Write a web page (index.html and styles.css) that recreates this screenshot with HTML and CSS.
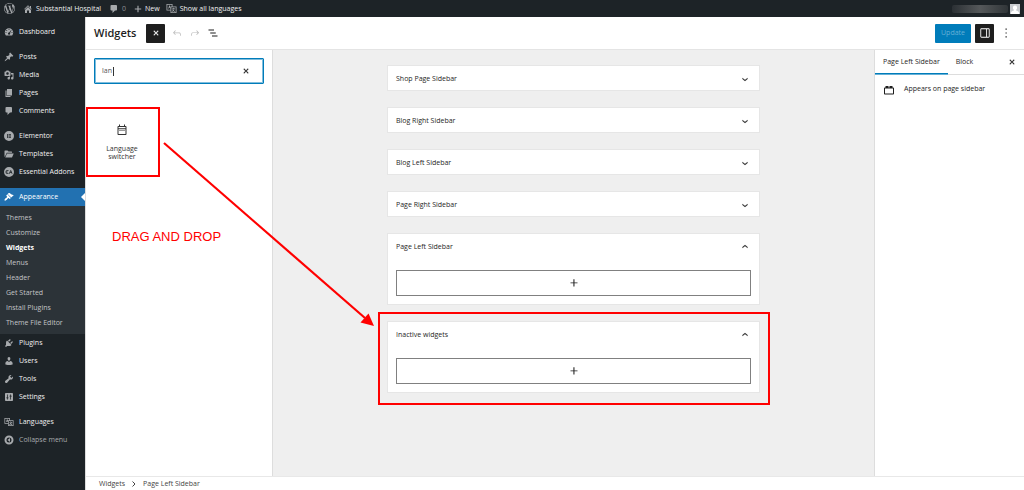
FILE: index.html
```html
<!DOCTYPE html>
<html lang="en">
<head>
<meta charset="utf-8">
<title>Widgets</title>
<link rel="stylesheet" href="styles.css">
</head>
<body>
<svg class="sprite" aria-hidden="true">
  <symbol id="wp" viewBox="0 0 24 24"><path d="M21.469 6.825c.84 1.537 1.318 3.3 1.318 5.175 0 3.979-2.156 7.456-5.363 9.325l3.295-9.527c.615-1.54.82-2.771.82-3.864 0-.405-.026-.78-.07-1.11m-7.981.105c.647-.03 1.232-.105 1.232-.105.582-.075.514-.93-.067-.899 0 0-1.755.135-2.88.135-1.064 0-2.85-.15-2.85-.15-.585-.03-.661.855-.075.885 0 0 .54.061 1.125.09l1.68 4.605-2.37 7.08L5.354 6.9c.649-.03 1.234-.1 1.234-.1.585-.075.516-.93-.065-.896 0 0-1.746.138-2.874.138-.2 0-.438-.008-.69-.015C4.911 3.15 8.235 1.215 12 1.215c2.809 0 5.365 1.072 7.286 2.833-.046-.003-.091-.009-.141-.009-1.06 0-1.812.923-1.812 1.914 0 .89.513 1.643 1.06 2.531.411.72.89 1.643.89 2.977 0 .915-.354 1.994-.821 3.479l-1.075 3.585-3.9-11.61.001.014zM12 22.784c-1.059 0-2.081-.153-3.048-.437l3.237-9.406 3.315 9.087c.024.053.05.101.078.149-1.12.393-2.325.609-3.582.609M1.211 12c0-1.564.336-3.05.935-4.39L7.29 21.709C3.694 19.96 1.212 16.271 1.211 12M12 0C5.385 0 0 5.385 0 12s5.385 12 12 12 12-5.385 12-12S18.615 0 12 0"/></symbol>
  <symbol id="home" viewBox="0 0 20 20"><path d="M16 8.500l1.530 1.530-1.060 1.060L10 4.600l-6.470 6.490-1.060-1.060L10 2.500l4 4V4h2v4.500zm-6-2.460l6 5.990V18H12v-5H8v5H4v-5.970z"/></symbol>
  <symbol id="comment" viewBox="0 0 20 20"><path d="M5 2h9q.82 0 1.410.59T16 4v7q0 .82-.59 1.410T14 13h-2l-5 5v-5H5q-.82 0-1.410-.59T3 11V4q0-.82.59-1.410T5 2z"/></symbol>
  <symbol id="add" viewBox="0 0 20 20"><path d="M8.600 2h2.800v6.600H18v2.800h-6.600V18H8.600v-6.600H2V8.600h6.600z"/></symbol>
  <symbol id="lang" viewBox="0 0 22 20"><path fill-rule="evenodd" d="M1 1h12v5h8v13H9v-5H1zm1.600 1.600v9.800H9V6h2.400V2.600zM10.600 7.600v9.800h8.800V7.600z"/><path d="M6.500 4h1.200l2 6H8.200l-.4-1.300H6.300L5.900 10H4.500zM14.300 8.500h1.400v1.300h2.500V11h-1.200c-.3 1.200-.8 2.100-1.400 2.900.7.600 1.500 1 2.400 1.300l-.6 1.200c-1.100-.4-2-.9-2.800-1.600-.8.700-1.700 1.200-2.700 1.600l-.5-1.200c.9-.3 1.600-.7 2.300-1.300-.5-.6-.9-1.200-1.200-2l1.200-.3c.2.500.5 1 .9 1.400.5-.6.800-1.200 1-2h-3.900V9.800h2.600z"/></symbol>
  <symbol id="dash" viewBox="0 0 20 20"><path fill-rule="evenodd" d="M3.760 17h12.480c1.390-1.560 2.260-3.600 2.260-5.850C18.500 6.400 14.700 2.500 10 2.500s-8.500 3.900-8.500 8.650c0 2.250.87 4.290 2.260 5.850zM10 4a1 1 0 1 1 0 2 1 1 0 0 1 0-2zM5.500 6a1 1 0 1 1 0 2 1 1 0 0 1 0-2zm9.200-.3l.3.300-2.900 6.100A2.200 2.200 0 1 1 10.300 11zM4 10a1 1 0 1 1 0 2 1 1 0 0 1 0-2zm12 0a1 1 0 1 1 0 2 1 1 0 0 1 0-2z"/></symbol>
  <symbol id="pin" viewBox="0 0 20 20"><path d="M10.440 3.020l1.820-1.820 6.360 6.350-1.830 1.820c-1.050-.68-2.480-.57-3.410.36l-.75.750c-.92.930-1.040 2.350-.35 3.410l-1.830 1.820-2.410-2.410-2.800 2.790c-.42.420-3.380 2.710-3.800 2.290s1.860-3.390 2.280-3.810l2.790-2.790L4.100 9.360l1.830-1.820c1.050.690 2.480.57 3.400-.36l.75-.75c.93-.92 1.050-2.350.36-3.410z"/></symbol>
  <symbol id="media" viewBox="0 0 20 20"><path d="M13 11V4c0-.55-.45-1-1-1h-1.670L9 1H5L3.670 3H2c-.55 0-1 .45-1 1v7c0 .55.450 1 1 1h10c.55 0 1-.45 1-1zM7 4.500c1.380 0 2.500 1.120 2.500 2.500S8.380 9.500 7 9.500 4.500 8.380 4.500 7 5.620 4.500 7 4.500zM14 6h5v10.500c0 1.380-1.120 2.500-2.500 2.500S14 17.880 14 16.500s1.120-2.500 2.500-2.500c.17 0 .34.020.5.050V9h-3V6zm-4 8.050V13h2v3.500c0 1.380-1.120 2.500-2.500 2.500S7 17.880 7 16.500 8.120 14 9.500 14c.17 0 .34.020.5.050z"/></symbol>
  <symbol id="pages" viewBox="0 0 20 20"><path d="M6 15V2h10v13H6zm-1 1h8v2H3V5h2v11z"/></symbol>
  <symbol id="elementor" viewBox="0 0 20 20"><path fill-rule="evenodd" d="M10 0a10 10 0 1 1 0 20 10 10 0 0 1 0-20zM6 6v8h1.600V6zm3 0v1.600h5V6zm0 3.200v1.600h5V9.200zm0 3.200V14h5v-1.600z"/></symbol>
  <symbol id="folder" viewBox="0 0 20 20"><path d="M1 16V4q0-1 1-1h5l2 2h6q1 0 1 1v1.500H5.500L2.500 14zm1.500 1L6 9h13.500L16 17z"/></symbol>
  <symbol id="ea" viewBox="0 0 20 20"><path fill-rule="evenodd" d="M10 0a10 10 0 1 1 0 20 10 10 0 0 1 0-20zM5.500 6.500C4 6.500 3.200 8 3.200 10s.8 3.500 2.300 3.500H9v-1.400H6c-.8 0-1.200-.5-1.300-1.400H8V9.300H4.700c.1-.9.5-1.400 1.300-1.400h3V6.500zm7.200 0l-3 7h1.600l.6-1.500h3l.6 1.500h1.600l-3-7zm.7 1.800l1 2.400h-2z"/></symbol>
  <symbol id="brush" viewBox="0 0 20 20"><path d="M14.480 11.060L7.410 3.990l1.500-1.500c.5-.56 2.300-.47 3.510.32 1.210.800 1.430 1.280 2.910 2.100 1.180.640 2.450 1.260 4.450.85zm-.71.710L6.700 4.700 4.930 6.470c-.39.390-.39 1.020 0 1.410l1.060 1.060c.39.390.39 1.030 0 1.420-.6.600-1.430 1.110-2.210 1.690-.35.260-.7.530-1.010.84C1.430 14.230.400 16.080 1.400 17.070c.99 1 2.840-.03 4.180-1.360.310-.31.580-.66.850-1.020.570-.78 1.080-1.610 1.690-2.210.39-.39 1.020-.39 1.410 0l1.060 1.060c.39.390 1.020.390 1.410 0z"/></symbol>
  <symbol id="plug" viewBox="0 0 20 20"><path d="M13.110 4.360L9.870 7.600 8 5.730l3.240-3.240c.35-.34 1.050-.2 1.560.32.520.510.660 1.210.31 1.550zm-8 1.770l.91-1.120 9.010 9.010-1.190.84c-.71.710-2.630 1.160-3.820 1.160H6.140L4.900 17.260c-.59.590-1.540.590-2.120 0-.59-.58-.59-1.530 0-2.120l1.240-1.240v-3.880c0-1.130.4-3.190 1.090-3.890zm7.260 3.970l3.240-3.240c.340-.35 1.040-.21 1.550.31.520.510.660 1.210.310 1.550l-3.240 3.250z"/></symbol>
  <symbol id="user" viewBox="0 0 20 20"><path d="M10 9.250c-2.270 0-2.730-3.440-2.730-3.440C7 4.020 7.820 2 9.970 2c2.160 0 2.980 2.020 2.710 3.810 0 0-.41 3.440-2.680 3.440zm0 2.570L12.720 10c2.390 0 4.520 2.330 4.520 4.530v2.490s-3.650 1.130-7.240 1.130c-3.650 0-7.240-1.130-7.240-1.130v-2.490c0-2.250 1.940-4.480 4.470-4.480z"/></symbol>
  <symbol id="wrench" viewBox="0 0 20 20"><path d="M16.680 9.770c-1.340 1.340-3.300 1.670-4.950.99l-5.410 6.520c-.99.990-2.590.990-3.580 0s-.99-2.590 0-3.570l6.520-5.420c-.68-1.650-.35-3.610.99-4.950 1.280-1.280 3.120-1.620 4.720-1.060l-2.890 2.890 2.820 2.820 2.860-2.870c.530 1.580.180 3.390-1.080 4.650z"/></symbol>
  <symbol id="settings" viewBox="0 0 20 20"><path fill-rule="evenodd" d="M18 16V4c0-1.100-.9-2-2-2H4c-1.100 0-2 .9-2 2v12c0 1.100.9 2 2 2h12c1.100 0 2-.9 2-2zM6 5h1.500v6H9v1.500H7.500V15H6v-2.500H4.500V11H6zm6.500 0H14v2.500h1.500V9H14v6h-1.500V9H11V7.500h1.500z"/></symbol>
  <symbol id="collapse" viewBox="0 0 20 20"><path fill-rule="evenodd" d="M10 1a9 9 0 1 1 0 18 9 9 0 0 1 0-18zm0 4a5 5 0 1 0 0 10 5 5 0 0 0 0-10z"/><path d="M12 6v8l-5-4z"/></symbol>
  <symbol id="close" viewBox="0 0 24 24"><path d="M12 13.060l3.712 3.713 1.061-1.060L13.061 12l3.712-3.712-1.060-1.060L12 10.938 8.288 7.227l-1.061 1.060L10.939 12l-3.712 3.712 1.060 1.061L12 13.061z" stroke="currentColor" stroke-width=".5"/></symbol>
  <symbol id="undo" viewBox="0 0 24 24"><path d="M18.300 11.700c-.6-.6-1.400-.9-2.300-.9H6.700l2.900-3.300-1.100-1-4.500 5L8.500 16l1-1-2.700-2.700H16c.5 0 .9.200 1.300.5 1 1 1 3.400 1 4.500v.3h1.500v-.2c0-1.500 0-4.300-1.500-5.700z"/></symbol>
  <symbol id="redo" viewBox="0 0 24 24"><path d="M15.600 6.500l-1.100 1 2.900 3.300H8c-.9 0-1.700.3-2.300.9-1.400 1.500-1.400 4.200-1.400 5.600v.2h1.500v-.3c0-1.100 0-3.500 1-4.500.3-.3.700-.5 1.300-.5h9.200L14.500 15l1.100 1.100 4.600-4.600-4.600-5z"/></symbol>
  <symbol id="list" viewBox="0 0 24 24"><path d="M3 5h11v2H3zm3.500 6h11v2h-11zM10 17h11v2H10z"/></symbol>
  <symbol id="drawer" viewBox="0 0 24 24"><path fill-rule="evenodd" d="M18 4H6c-1.100 0-2 .9-2 2v12c0 1.100.9 2 2 2h12c1.100 0 2-.9 2-2V6c0-1.100-.9-2-2-2zm-4 14.500H6c-.3 0-.5-.2-.5-.5V6c0-.3.2-.5.5-.5h8v13zm4.500-.5c0 .3-.2.500-.5.500h-2.500v-13H18c.3 0 .5.200.5.500v12z"/></symbol>
  <symbol id="more" viewBox="0 0 24 24"><path d="M11 3h2.500v2.500H11zm0 7.800h2.500v2.400H11zm0 7.700h2.500V21H11z"/></symbol>
  <symbol id="down" viewBox="0 0 24 24"><path d="M17.500 11.600L12 16l-5.500-4.400.9-1.200L12 14l4.500-3.600 1 1.200z" stroke="currentColor" stroke-width=".6"/></symbol>
  <symbol id="up" viewBox="0 0 24 24"><path d="M6.500 12.400L12 8l5.500 4.400-.9 1.200L12 10l-4.500 3.600-1-1.200z" stroke="currentColor" stroke-width=".6"/></symbol>
  <symbol id="plus" viewBox="0 0 24 24"><path d="M11 12.500V18h1.800v-5.500H18V11h-5.200V5.500H11V11H6v1.500z"/></symbol>
  <symbol id="block" viewBox="0 0 24 24"><path fill-rule="evenodd" d="M20 7h-1V4h-6v3h-2V4H5v3H4c-1.100 0-2 .9-2 2v10c0 1.100.9 2 2 2h16c1.100 0 2-.9 2-2V9c0-1.100-.9-2-2-2zm0 12H4V9h16z"/></symbol>
  <symbol id="calendar" viewBox="0 0 24 24"><path fill-rule="evenodd" d="M6 1h2v3h8V1h2v3h1c1.100 0 2 .9 2 2v14c0 1.100-.9 2-2 2H5c-1.100 0-2-.9-2-2V6c0-1.100.9-2 2-2h1zM5 6v2.500h14V6zm0 4.300V20h14v-9.700zM7 12h2v2H7zm4 0h2v2h-2zm4 0h2v2h-2z"/></symbol>
  <symbol id="avatar" viewBox="0 0 20 20"><path fill="#c9ccd0" d="M0 0h20v20H0z"/><path fill="#fff" d="M10 3a4.200 4.200 0 0 1 4.200 4.400c0 1.800-.8 3.500-2 4.300v1.500c2.800.7 5 1.600 5.800 3.800v3H2v-3c.8-2.200 3-3.100 5.800-3.800v-1.500c-1.200-.8-2-2.500-2-4.300A4.200 4.200 0 0 1 10 3z"/></symbol>
</svg>

<header class="adminbar">
  <a href="#" class="bar-item" aria-label="About WordPress"><svg class="i11"><use href="#wp"/></svg></a>
  <a href="#" class="bar-item"><svg class="i10"><use href="#home"/></svg>Substantial Hospital</a>
  <a href="#" class="bar-item bar-count"><svg class="i10"><use href="#comment"/></svg>0</a>
  <a href="#" class="bar-item"><svg class="i8"><use href="#add"/></svg>New</a>
  <a href="#" class="bar-item bar-lang"><svg class="i11"><use href="#lang"/></svg>Show all languages</a>
  <a href="#" class="bar-item account" aria-label="Account"><span class="account-name"></span><svg class="avatar"><use href="#avatar"/></svg></a>
</header>

<div class="shell">
  <nav class="menu" aria-label="Main menu">
    <ul class="group">
      <li><a href="#"><svg><use href="#dash"/></svg>Dashboard</a></li>
    </ul>
    <ul class="group">
      <li><a href="#"><svg><use href="#pin"/></svg>Posts</a></li>
      <li><a href="#"><svg><use href="#media"/></svg>Media</a></li>
      <li><a href="#"><svg><use href="#pages"/></svg>Pages</a></li>
      <li><a href="#"><svg><use href="#comment"/></svg>Comments</a></li>
    </ul>
    <ul class="group">
      <li><a href="#"><svg><use href="#elementor"/></svg>Elementor</a></li>
      <li><a href="#"><svg><use href="#folder"/></svg>Templates</a></li>
      <li><a href="#"><svg><use href="#ea"/></svg>Essential Addons</a></li>
    </ul>
    <ul class="group">
      <li><a href="#" class="current"><svg><use href="#brush"/></svg>Appearance</a>
        <ul class="submenu">
          <li><a href="#">Themes</a></li>
          <li><a href="#">Customize</a></li>
          <li><a href="#" class="active">Widgets</a></li>
          <li><a href="#">Menus</a></li>
          <li><a href="#">Header</a></li>
          <li><a href="#">Get Started</a></li>
          <li><a href="#">Install Plugins</a></li>
          <li><a href="#">Theme File Editor</a></li>
        </ul>
      </li>
      <li><a href="#"><svg><use href="#plug"/></svg>Plugins</a></li>
      <li><a href="#"><svg><use href="#user"/></svg>Users</a></li>
      <li><a href="#"><svg><use href="#wrench"/></svg>Tools</a></li>
      <li><a href="#"><svg><use href="#settings"/></svg>Settings</a></li>
    </ul>
    <ul class="group">
      <li><a href="#"><svg><use href="#lang"/></svg>Languages</a></li>
      <li><button type="button" class="collapse"><svg><use href="#collapse"/></svg>Collapse menu</button></li>
    </ul>
  </nav>

  <main class="editor">
    <div class="toolbar">
      <h1>Widgets</h1>
      <button type="button" class="square" aria-label="Close block inserter"><svg class="i12"><use href="#close"/></svg></button>
      <button type="button" class="tool" aria-label="Undo" disabled><svg class="i12"><use href="#undo"/></svg></button>
      <button type="button" class="tool" aria-label="Redo" disabled><svg class="i12"><use href="#redo"/></svg></button>
      <button type="button" class="tool" aria-label="List view"><svg class="i12"><use href="#list"/></svg></button>
      <div class="toolbar-end">
        <button type="button" class="update">Update</button>
        <button type="button" class="square" aria-label="Settings"><svg class="i14"><use href="#drawer"/></svg></button>
        <button type="button" class="tool" aria-label="Options"><svg class="i12"><use href="#more"/></svg></button>
      </div>
    </div>

    <div class="workspace">
      <section class="inserter" aria-label="Block library">
        <div class="search">
          <input type="text" aria-label="Search for blocks" value="lan">
          <button type="button" aria-label="Reset search"><svg class="i12"><use href="#close"/></svg></button>
        </div>
        <button type="button" class="block-item">
          <svg class="i12"><use href="#calendar"/></svg>
          <span>Language<br>switcher</span>
        </button>
        <p class="hint">DRAG AND DROP</p>
      </section>

      <section class="canvas" aria-label="Widget areas">
        <article class="area"><button type="button" class="area-head">Shop Page Sidebar<svg class="i12"><use href="#down"/></svg></button></article>
        <article class="area"><button type="button" class="area-head">Blog Right Sidebar<svg class="i12"><use href="#down"/></svg></button></article>
        <article class="area"><button type="button" class="area-head">Blog Left Sidebar<svg class="i12"><use href="#down"/></svg></button></article>
        <article class="area"><button type="button" class="area-head">Page Right Sidebar<svg class="i12"><use href="#down"/></svg></button></article>
        <article class="area">
          <button type="button" class="area-head">Page Left Sidebar<svg class="i12"><use href="#up"/></svg></button>
          <button type="button" class="appender" aria-label="Add block"><svg class="i14"><use href="#plus"/></svg></button>
        </article>
        <article class="area marked">
          <button type="button" class="area-head">Inactive widgets<svg class="i12"><use href="#up"/></svg></button>
          <button type="button" class="appender" aria-label="Add block"><svg class="i14"><use href="#plus"/></svg></button>
        </article>
      </section>

      <aside class="settings">
        <div class="tabs">
          <button type="button" class="tab selected">Page Left Sidebar</button>
          <button type="button" class="tab">Block</button>
          <button type="button" class="tab-close" aria-label="Close settings"><svg class="i12"><use href="#close"/></svg></button>
        </div>
        <div class="about"><svg class="i12"><use href="#block"/></svg><p>Appears on page sidebar</p></div>
      </aside>

      <svg class="arrow" viewBox="0 0 216 190" aria-hidden="true">
        <path d="M2 2L203 177" stroke="#f00" stroke-width="2.200"/>
        <path d="M212 185L198.500 181.500L206.500 172.500z" fill="#f00"/>
      </svg>
    </div>

    <footer class="crumbs">
      <a href="#">Widgets</a><svg viewBox="0 0 8 8"><path d="M2.500 1.500L5 4L2.500 6.500" fill="none" stroke="currentColor"/></svg><span>Page Left Sidebar</span>
    </footer>
  </main>
</div>
</body>
</html>
```

FILE: styles.css
```css
* { box-sizing: border-box; }

body {
  margin: 0;
  height: 100vh;
  display: flex;
  flex-direction: column;
  font: 7px/10px "Open Sans", "Noto Sans", sans-serif;
  color: #1e1e1e;
  background: #fff;
}

ul { list-style: none; margin: 0; padding: 0; }
h1, p { margin: 0; }
a { color: inherit; text-decoration: none; }
svg { fill: currentColor; flex: none; }

button {
  display: flex;
  align-items: center;
  justify-content: center;
  padding: 0;
  border: 0;
  background: none;
  color: inherit;
  font: inherit;
}

.sprite { position: absolute; width: 0; height: 0; }
.i8 { width: 8px; height: 8px; }
.i10 { width: 10px; height: 10px; }
.i11 { width: 11px; height: 11px; }
.i12 { width: 12px; height: 12px; }
.i14 { width: 14px; height: 14px; }

/* Admin bar */
.adminbar {
  display: flex;
  align-items: center;
  gap: 8px;
  height: 17px;
  padding: 0 4px;
  flex: none;
  background: #1d2327;
  color: #f0f0f1;
}
.bar-item { display: flex; align-items: center; gap: 3px; white-space: nowrap; }
.bar-item svg { color: #a7aaad; }
.bar-count { color: #8c8f94; }
.bar-lang { margin-left: -2px; }
.account { margin-left: auto; gap: 2px; }
.account-name {
  width: 56px;
  height: 8px;
  border-radius: 2px;
  background: linear-gradient(90deg, #2b3034, #55585a 50%, #303538);
}
.avatar { width: 10px; height: 10px; }

/* Main menu */
.shell { flex: 1; display: flex; min-height: 0; }
.menu {
  width: 85px;
  flex: none;
  display: flex;
  flex-direction: column;
  gap: 7px;
  padding-top: 6px;
  background: #1d2327;
  color: #f0f0f1;
}
.group > li > a, .collapse {
  display: flex;
  align-items: center;
  justify-content: flex-start;
  gap: 5px;
  width: 100%;
  height: 18px;
  padding-left: 4px;
}
.group svg { width: 10px; height: 10px; color: #a7aaad; }
.group > li > a.current { position: relative; background: #2271b1; color: #fff; }
.group .current svg { color: #fff; }
.current::after {
  content: "";
  position: absolute;
  right: 0;
  top: 5px;
  border: 4px solid transparent;
  border-left: 0;
  border-right-color: #fff;
}
.collapse { color: #a7aaad; }
.submenu { padding: 4px 0; background: #2c3338; color: #c3c4c7; }
.submenu a { display: block; padding-left: 6px; line-height: 15px; }
.submenu .active { color: #fff; font-weight: 700; }

/* Editor */
.editor { flex: 1; min-width: 0; display: flex; flex-direction: column; border-left: 1px solid #ddd; }
.toolbar {
  display: flex;
  align-items: center;
  gap: 6px;
  height: 33px;
  flex: none;
  padding: 0 12px 0 8px;
  border-bottom: 1px solid #e4e4e4;
}
.toolbar h1 { margin-right: 4px; font-size: 11px; line-height: 16px; font-weight: 600; }
.square { width: 19px; height: 19px; border-radius: 1px; background: #1e1e1e; color: #fff; }
.tool { width: 12px; height: 19px; }
.tool:disabled { color: #bbb; }
.toolbar-end { display: flex; gap: 4px; margin-left: auto; }
.toolbar-end .tool { margin-left: 2px; }
.update { height: 19px; padding: 0 6px; border-radius: 1px; background: #007cba; color: #66b0d6; }

.workspace { flex: 1; display: flex; min-height: 0; position: relative; }
.inserter { width: 187px; flex: none; padding-top: 8px; border-right: 1px solid #ddd; }
.search {
  display: flex;
  align-items: center;
  height: 26px;
  margin: 0 8px;
  padding: 0 11px 0 7px;
  border: 1px solid #007cba;
  border-radius: 1px;
  box-shadow: inset 0 0 0 1px #80bddc;
}
.search input {
  flex: 1;
  min-width: 0;
  border: 0;
  padding: 0;
  outline: 0;
  background: linear-gradient(#333, #333) 11px 50% / 1px 9px no-repeat;
  font: inherit;
  color: #555;
}
.block-item {
  width: 74px;
  height: 70px;
  margin-top: 23px;
  padding-right: 2px;
  flex-direction: column;
  gap: 9px;
  border: 2px solid #f00;
  line-height: 8px;
  color: #333;
}
.hint {
  margin: 52px 0 0 26px;
  font: 13px/16px "Liberation Sans", Arial, sans-serif;
  color: #f00;
}

.canvas {
  flex: 1;
  min-width: 0;
  display: flex;
  flex-direction: column;
  align-items: center;
  gap: 16px;
  padding: 15px 16px;
  background: #efefef;
}
.area { width: 100%; max-width: 373px; border: 1px solid #e6e6e6; background: #fff; }
.area-head { justify-content: space-between; width: 100%; height: 24px; padding: 2px 8px 0; font-weight: 500; }
.appender {
  width: calc(100% - 16px);
  height: 26px;
  margin: 12px 8px 8px;
  border: 1px solid #808080;
}
.marked { position: relative; }
.marked::after {
  content: "";
  position: absolute;
  inset: -10px -11px -13px -10px;
  border: 2px solid #f00;
  pointer-events: none;
}

.settings { width: 150px; flex: none; border-left: 1px solid #ddd; }
.tabs { display: flex; height: 25px; border-bottom: 1px solid #ddd; font-weight: 500; }
.tab { padding: 0 8px; }
.tab.selected { box-shadow: inset 0 -1px #007cba, 0 1px #66b0d6; }
.tab-close { margin: 0 6px 0 auto; }
.about { display: flex; gap: 9px; padding: 9px 8px; }

.arrow { position: absolute; left: 76px; top: 91px; width: 216px; height: 190px; }

.crumbs {
  display: flex;
  align-items: center;
  gap: 5px;
  height: 14px;
  flex: none;
  padding-left: 13px;
  border-top: 1px solid #e8e8e8;
  color: #444;
}
.crumbs svg { width: 8px; height: 8px; }
```
